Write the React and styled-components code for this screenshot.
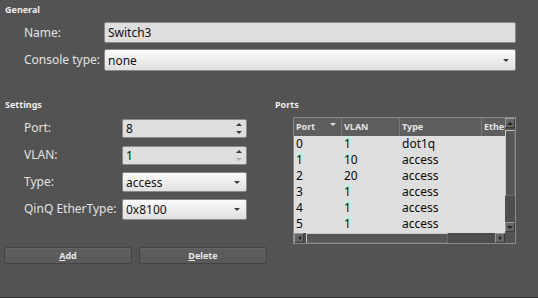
import React from 'react';
import styled, { createGlobalStyle } from 'styled-components';

const Global = createGlobalStyle`
  html, body { margin: 0; padding: 0; background: #535353; }
  body { font-family: "Noto Sans", "DejaVu Sans", sans-serif; }
`;

const Root = styled.div`
  width: 538px;
  height: 297px;
  border-bottom: 1px solid #2e2e2e;
  background: #535353;
  display: flex;
  flex-direction: column;
  color: #e0e0e0;
  font-size: 12px;
  overflow: hidden;
`;

const Section = styled.div`
  display: flex;
  flex-direction: column;
  padding-top: ${p => p.$top || 0}px;
`;

const GroupTitle = styled.div`
  font-size: 9px;
  font-weight: 700;
  line-height: 12px;
  color: #ececec;
  padding-left: ${p => p.$indent ?? 5}px;
`;

const FormGrid = styled.div`
  display: grid;
  grid-template-columns: ${p => p.$cols};
  grid-template-rows: ${p => p.$rows};
  row-gap: ${p => p.$gap}px;
  margin-top: ${p => p.$top}px;
  padding-left: 24px;
  align-items: center;
`;

const Label = styled.div`
  font-size: 12px;
  color: #e2e2e2;
  white-space: nowrap;
  line-height: 16px;
`;

const Field = styled.div`
  box-sizing: border-box;
  height: ${p => p.$h}px;
  border: 1px solid #8a8a8a;
  border-radius: 2px;
  background: #dedede;
  color: #111;
  font-size: 12px;
  display: flex;
  align-items: center;
  padding-left: 3px;
  padding-right: ${p => p.$pr ?? 3}px;
  justify-content: space-between;
`;

const SelectField = styled(Field)`
  background: linear-gradient(#fbfbfb, #dfdfdf);
`;

const Arrow = styled.span`
  width: 0;
  height: 0;
  border-left: 3px solid transparent;
  border-right: 3px solid transparent;
  border-top: 3px solid ${p => p.$c || '#3a3a3a'};
`;

const UpArrow = styled.span`
  width: 0;
  height: 0;
  border-left: 3px solid transparent;
  border-right: 3px solid transparent;
  border-bottom: 3px solid ${p => p.$c || '#3a3a3a'};
`;

const SpinArrows = styled.div`
  display: flex;
  flex-direction: column;
  align-items: center;
  gap: 5px;
`;

const Lower = styled.div`
  display: flex;
  margin-top: 28px;
`;

const SettingsCol = styled.div`
  width: 275px;
  display: flex;
  flex-direction: column;
`;

const PortsCol = styled.div`
  flex: 1;
  display: flex;
  flex-direction: column;
`;

const ButtonRow = styled.div`
  display: flex;
  gap: 7px;
  padding-left: 4px;
  margin-top: 28px;
`;

const Button = styled.div`
  box-sizing: border-box;
  width: 128px;
  height: 17px;
  border: 1px solid #434343;
  border-radius: 2px;
  background: linear-gradient(#5e5e5e, #595959);
  box-shadow: inset 0 1px 0 #666;
  display: flex;
  align-items: center;
  justify-content: center;
  font-size: 9px;
  font-weight: 700;
  color: #e6e6e6;
`;

const Table = styled.div`
  box-sizing: border-box;
  width: 223px;
  height: 127px;
  margin-top: 6px;
  margin-left: 18px;
  border: 1px solid #8a8a8a;
  display: grid;
  grid-template-columns: 211px 10px;
  grid-template-rows: 115px 10px;
`;

const View = styled.div`
  overflow: hidden;
  background: #dedede;
`;

const Header = styled.div`
  display: grid;
  grid-template-columns: 48px 58px 82px 60px;
  height: 18px;
  background: #5e5e5e;
`;

const HeadCell = styled.div`
  position: relative;
  box-sizing: border-box;
  border-right: 1px solid #777;
  padding-left: 2px;
  font-size: 9px;
  font-weight: 700;
  line-height: 18px;
  color: #e4e4e4;
  white-space: nowrap;
`;

const SortMark = styled.span`
  position: absolute;
  right: 5px;
  top: 5px;
  width: 0;
  height: 0;
  border-left: 3px solid transparent;
  border-right: 3px solid transparent;
  border-top: 3px solid #e0e0e0;
`;

const Row = styled.div`
  display: grid;
  grid-template-columns: 48px 58px 82px 60px;
  height: 16px;
`;

const Cell = styled.div`
  padding-left: 2px;
  font-size: 12px;
  line-height: 16px;
  color: #0a0a0a;
  white-space: nowrap;
`;

const VScroll = styled.div`
  display: flex;
  flex-direction: column;
  background: #4e4e4e;
  height: 114px;
`;

const HScroll = styled.div`
  display: flex;
  background: #4e4e4e;
`;

const Corner = styled.div`
  background: #535353;
`;

const SBtn = styled.div`
  box-sizing: border-box;
  width: 10px;
  height: 10px;
  flex: none;
  border: 1px solid #9a9a9a;
  border-right-color: #3c3c3c;
  border-bottom-color: #3c3c3c;
  background: #666;
  display: flex;
  align-items: center;
  justify-content: center;
`;

const Thumb = styled.div`
  box-sizing: border-box;
  flex: none;
  ${p => (p.$v ? `height: ${p.$len}px; margin-top: 2px;` : `width: ${p.$len}px; margin-left: 2px;`)}
  border: 1px solid #c8c8c8;
  border-right-color: #6a6a6a;
  border-bottom-color: #6a6a6a;
  background: #565656;
`;

const Fill = styled.div`
  flex: 1;
`;

const LArrow = styled.span`
  width: 0;
  height: 0;
  border-top: 2px solid transparent;
  border-bottom: 2px solid transparent;
  border-${p => (p.$dir === 'left' ? 'right' : 'left')}: 3px solid #222;
`;

const rows = [
  ['0', '1', 'dot1q'],
  ['1', '10', 'access'],
  ['2', '20', 'access'],
  ['3', '1', 'access'],
  ['4', '1', 'access'],
  ['5', '1', 'access'],
];

export default function App() {
  return (
    <Root>
      <Global />
      <Section $top={4}>
        <GroupTitle>General</GroupTitle>
        <FormGrid $cols="80px 412px" $rows="21px 22px" $gap={6} $top={6}>
          <Label>Name:</Label>
          <Field $h={21}>Switch3</Field>
          <Label>Console type:</Label>
          <SelectField $h={22} $pr={6}>
            none
            <Arrow />
          </SelectField>
        </FormGrid>
      </Section>
      <Lower>
        <SettingsCol>
          <GroupTitle>Settings</GroupTitle>
          <FormGrid $cols="98px 125px" $rows="repeat(4, 20px)" $gap={7} $top={7}>
            <Label>Port:</Label>
            <Field $h={19} $pr={4}>
              8
              <SpinArrows>
                <UpArrow />
                <Arrow />
              </SpinArrows>
            </Field>
            <Label>VLAN:</Label>
            <Field $h={19} $pr={4}>
              1
              <SpinArrows>
                <UpArrow />
                <Arrow $c="#b0b0b0" />
              </SpinArrows>
            </Field>
            <Label>Type:</Label>
            <SelectField $h={20} $pr={6}>
              access
              <Arrow />
            </SelectField>
            <Label>QinQ EtherType:</Label>
            <SelectField $h={21} $pr={6}>
              0x8100
              <Arrow />
            </SelectField>
          </FormGrid>
          <ButtonRow>
            <Button>
              <span><u>A</u>dd</span>
            </Button>
            <Button>
              <span><u>D</u>elete</span>
            </Button>
          </ButtonRow>
        </SettingsCol>
        <PortsCol>
          <GroupTitle $indent={0}>Ports</GroupTitle>
          <Table>
            <View>
              <Header>
                <HeadCell>
                  Port
                  <SortMark />
                </HeadCell>
                <HeadCell>VLAN</HeadCell>
                <HeadCell>Type</HeadCell>
                <HeadCell>EtherType</HeadCell>
              </Header>
              {rows.map(r => (
                <Row key={r[0]}>
                  <Cell>{r[0]}</Cell>
                  <Cell>{r[1]}</Cell>
                  <Cell>{r[2]}</Cell>
                  <Cell />
                </Row>
              ))}
            </View>
            <VScroll>
              <SBtn><UpArrow $c="#222" /></SBtn>
              <Thumb $v $len={66} />
              <Fill />
              <SBtn><Arrow $c="#222" /></SBtn>
            </VScroll>
            <HScroll>
              <SBtn><LArrow $dir="left" /></SBtn>
              <Thumb $len={142} />
              <Fill />
              <SBtn><LArrow $dir="right" /></SBtn>
            </HScroll>
            <Corner />
          </Table>
        </PortsCol>
      </Lower>
    </Root>
  );
}
